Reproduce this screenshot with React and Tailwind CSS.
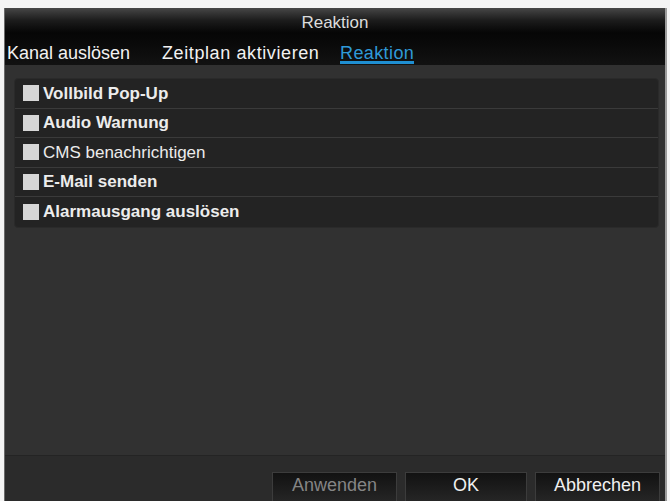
import React from "react";

const items = [
    { label: "Vollbild Pop-Up", bold: true },
    { label: "Audio Warnung", bold: true },
    { label: "CMS benachrichtigen", bold: false },
    { label: "E-Mail senden", bold: true },
    { label: "Alarmausgang auslösen", bold: true },
];

const App = () => {
    return (
        <div className="w-[670px] h-[501px] overflow-hidden bg-[#f4f4f4] pt-2 pl-1 font-['Liberation_Sans',Arial,sans-serif]">
            <div className="w-[663px] h-full flex flex-col border-l border-[#6a6a6a] border-r-2 border-r-[#9c9c9c]">

                {/* Title bar */}
                <div className="h-[25px] shrink-0 bg-linear-to-b from-[#474747] via-[#1c1c1c] to-[#060606] flex items-center justify-center">
                    <span className="text-[17px] leading-none text-[#dcdcdc] pt-[3px]">
                        Reaktion
                    </span>
                </div>

                {/* Tabs */}
                <div className="h-[32px] shrink-0 bg-linear-to-b from-[#060606] to-[#121212] flex items-start pl-[2px] pt-[13px] text-[18px] leading-[14px] text-[#f2f2f2]">
                    <span className="w-[155px]">Kanal auslösen</span>
                    <span className="w-[178px] tracking-[0.6px]">Zeitplan aktivieren</span>
                    <span className="text-[#2f9ad8] border-b-[3px] border-[#1f8fd2] pb-[1px] tracking-[0.4px]">
                        Reaktion
                    </span>
                </div>

                {/* Content */}
                <div className="h-[390px] shrink-0 bg-[#313131] pt-[13px] pl-[9px]">
                    <div className="w-[645px] rounded-[4px] border border-[#2a2a2a] bg-[#232323] divide-y divide-[#3a3a3a] overflow-hidden">
                        {items.map((item) => (
                            <div key={item.label} className="h-[29.5px] flex items-center pl-[8px] gap-[4px]">
                                <span className="w-[16px] h-[16px] bg-[#d6d6d6] shrink-0"></span>
                                <span className={`text-[17px] leading-none text-[#ececec] ${item.bold ? "font-bold" : "font-normal"}`}>
                                    {item.label}
                                </span>
                            </div>
                        ))}
                    </div>
                </div>

                {/* Footer */}
                <div className="flex-1 bg-[#2b2b2b] border-t border-[#242424] flex justify-end items-start gap-2 pt-[16px] pr-[5px]">
                    <button className="w-[125px] h-[36px] bg-linear-to-b from-[#121212] to-[#2a2a2a] border border-[#3c3c3c] text-[18px] leading-[20px] pt-[2px] text-[#858585] flex justify-center items-start">
                        Anwenden
                    </button>
                    <button className="w-[122px] h-[36px] bg-linear-to-b from-[#121212] to-[#2a2a2a] border border-[#3c3c3c] text-[18px] leading-[20px] pt-[2px] text-[#f0f0f0] flex justify-center items-start">
                        OK
                    </button>
                    <button className="w-[125px] h-[36px] bg-linear-to-b from-[#121212] to-[#2a2a2a] border border-[#3c3c3c] text-[18px] leading-[20px] pt-[2px] text-[#f0f0f0] flex justify-center items-start">
                        Abbrechen
                    </button>
                </div>

            </div>
        </div>
    );
};

export default App;
